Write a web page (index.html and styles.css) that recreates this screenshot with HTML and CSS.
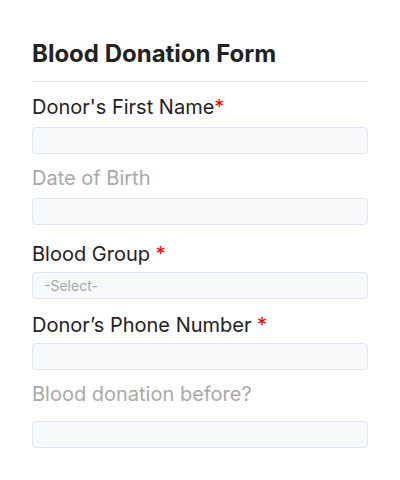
FILE: index.html
```
<!DOCTYPE html>
<html>
<head>
<meta charset="utf-8">
<link rel="stylesheet" href="styles.css">
</head>
<body>
<div class="form">
  <h1 class="title">Blood Donation Form</h1>
  <div class="divider"></div>
  <div class="field f1">
    <div class="label">Donor's First Name<span class="req">*</span></div>
    <div class="input"></div>
  </div>
  <div class="field f2">
    <div class="label muted">Date of Birth</div>
    <div class="input"></div>
  </div>
  <div class="field f3">
    <div class="label">Blood Group <span class="req">*</span></div>
    <div class="input select">-Select-</div>
  </div>
  <div class="field f4">
    <div class="label">Donor’s Phone Number <span class="req">*</span></div>
    <div class="input"></div>
  </div>
  <div class="field f5">
    <div class="label muted">Blood donation before?</div>
    <div class="input"></div>
  </div>
</div>
</body>
</html>
```
FILE: styles.css
```
html, body {
  margin: 0;
  padding: 0;
  background: #ffffff;
}
body {
  font-family: Inter, "Noto Sans", sans-serif;
  color: #222222;
}
.form {
  padding: 39px 32px 0 32px;
}
.title {
  margin: 0;
  font-size: 24px;
  line-height: 29px;
  font-weight: 700;
  color: #222222;
}
.divider {
  margin-top: 13px;
  height: 1px;
  background: #e6e7eb;
}
.label {
  font-size: 20px;
  line-height: 24px;
  color: #222222;
}
.label.muted {
  color: #a9a9a9;
}
.req {
  color: #f00000;
}
.input {
  box-sizing: border-box;
  height: 27px;
  border: 1px solid #dfe3f7;
  border-radius: 4px;
  background: #f7f8fa;
}
.select {
  font-size: 14px;
  line-height: 25px;
  color: #a8a8a8;
  padding-left: 11px;
}
.f1 .label { margin-top: 13px; }
.f1 .input { margin-top: 8px; }
.f2 .label { margin-top: 12px; }
.f2 .input { margin-top: 8px; }
.f3 .label { margin-top: 17px; }
.f3 .input { margin-top: 6px; }
.f4 .label { margin-top: 14px; }
.f4 .input { margin-top: 6px; }
.f5 .label { margin-top: 12px; }
.f5 .input { margin-top: 15px; }
```
